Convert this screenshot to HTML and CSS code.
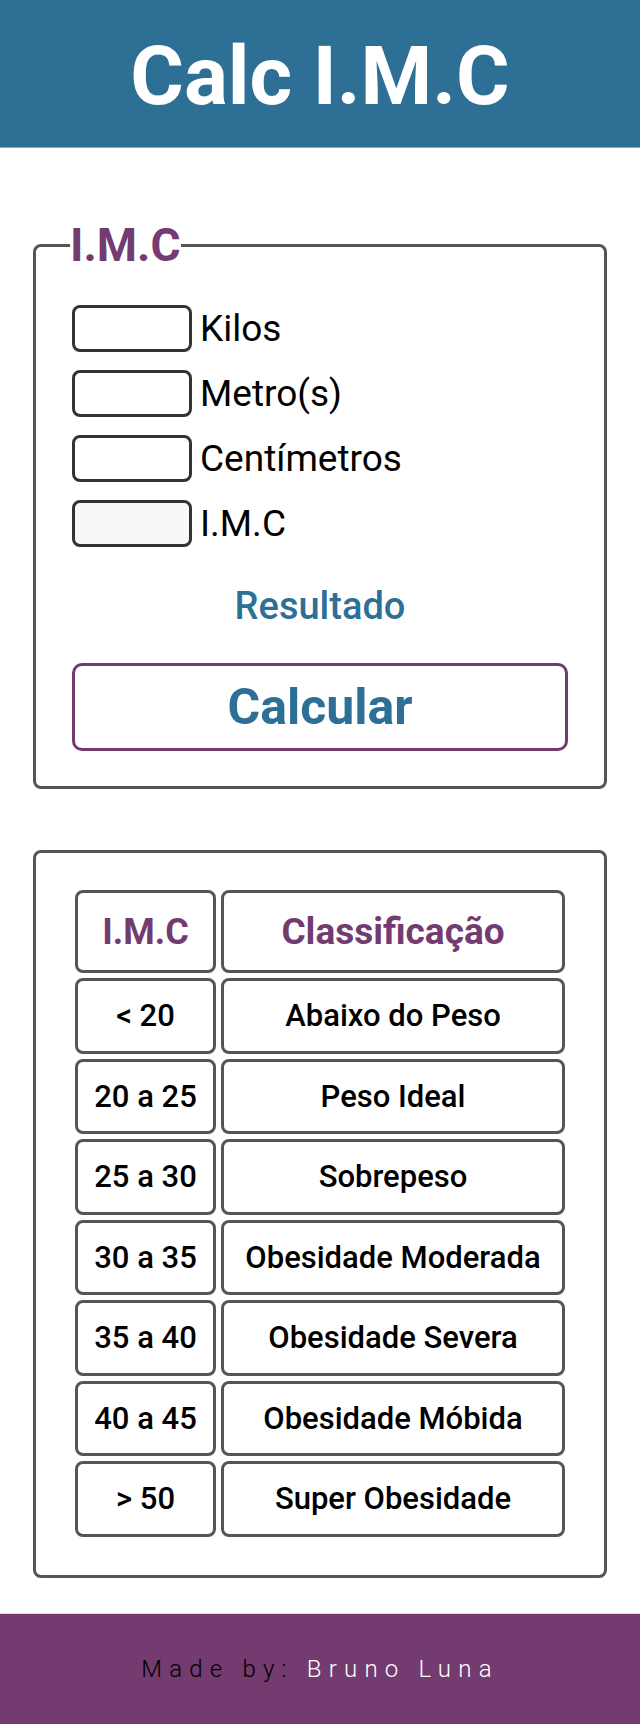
FILE: index.html
```html
<!DOCTYPE html>
<html lang="pt-BR">
<head>
<meta charset="utf-8">
<title>Calc I.M.C</title>
<link rel="stylesheet" href="styles.css">
</head>
<body>
<header class="topo">
  <h1 class="titulo">Calc I.M.C</h1>
</header>
<main class="conteudo">
  <fieldset class="calc">
    <legend class="calc-legenda">I.M.C</legend>
    <div class="campos">
      <div class="campo"><input class="entrada" type="text"><label class="rotulo">Kilos</label></div>
      <div class="campo"><input class="entrada" type="text"><label class="rotulo">Metro(s)</label></div>
      <div class="campo"><input class="entrada" type="text"><label class="rotulo">Centímetros</label></div>
      <div class="campo"><input class="entrada entrada-fixa" type="text" readonly><label class="rotulo">I.M.C</label></div>
    </div>
    <p class="resultado">Resultado</p>
    <button class="botao" type="button">Calcular</button>
  </fieldset>
  <section class="tabela-card">
    <table class="tabela">
      <thead>
        <tr><th class="col-imc">I.M.C</th><th>Classificação</th></tr>
      </thead>
      <tbody>
        <tr><td>&lt; 20</td><td>Abaixo do Peso</td></tr>
        <tr><td>20 a 25</td><td>Peso Ideal</td></tr>
        <tr><td>25 a 30</td><td>Sobrepeso</td></tr>
        <tr><td>30 a 35</td><td>Obesidade Moderada</td></tr>
        <tr><td>35 a 40</td><td>Obesidade Severa</td></tr>
        <tr><td>40 a 45</td><td>Obesidade Móbida</td></tr>
        <tr><td>&gt; 50</td><td>Super Obesidade</td></tr>
      </tbody>
    </table>
  </section>
</main>
<footer class="rodape">
  <p class="assinatura"><span class="feito">Made by:</span> <span class="autor">Bruno Luna</span></p>
</footer>
</body>
</html>
```

FILE: styles.css
```css
* { box-sizing: border-box; }

body {
  margin: 0;
  font-family: Roboto, "Liberation Sans", sans-serif;
  color: #000;
  background: #fff;
}

.topo {
  height: 148px;
  padding-top: 4px;
  background: #2e7095;
  border-bottom: 1px solid #7fa9c4;
  display: flex;
  align-items: center;
  justify-content: center;
}

.titulo {
  margin: 0;
  color: #fff;
  font-size: 82px;
  font-weight: 700;
  line-height: 1;
}

.conteudo {
  padding: 70px 33px 35px;
}

.calc {
  margin: 0;
  min-width: 0;
  border: 3px solid #555;
  border-radius: 8px;
  padding: 33px 36px 35px;
}

.calc-legenda {
  margin-left: -2px;
  padding: 0;
  font-size: 46px;
  font-weight: 700;
  color: #733b6f;
}

.campos {
  display: flex;
  flex-direction: column;
  gap: 18px;
}

.campo {
  display: flex;
  align-items: center;
}

.entrada {
  width: 120px;
  height: 47px;
  margin: 0;
  padding: 0 8px;
  border: 3px solid #333;
  border-radius: 8px;
  background: #fff;
  font: inherit;
}

.entrada-fixa {
  background: #f8f8f8;
}

.rotulo {
  margin-left: 8px;
  font-size: 37px;
  color: #000;
}

.resultado {
  margin: 37px 0 0;
  text-align: center;
  font-size: 38px;
  font-weight: 500;
  color: #2e7095;
}

.botao {
  display: block;
  width: 100%;
  height: 88px;
  margin-top: 35px;
  border: 3px solid #733b6f;
  border-radius: 10px;
  background: #fff;
  font-family: inherit;
  font-size: 50px;
  font-weight: 700;
  color: #2e7095;
}

.tabela-card {
  margin-top: 61px;
  border: 3px solid #555;
  border-radius: 8px;
  padding: 32px 34px 33px;
}

.tabela {
  width: 100%;
  table-layout: fixed;
  border-collapse: separate;
  border-spacing: 5px;
}

.tabela th,
.tabela td {
  border: 3px solid #555;
  border-radius: 8px;
  padding: 0;
  text-align: center;
  vertical-align: middle;
}

.tabela th {
  height: 83px;
  font-size: 37px;
  font-weight: 700;
  color: #733b6f;
}

.tabela .col-imc {
  width: 141px;
  font-size: 36px;
}

.tabela td {
  height: 75.5px;
  font-size: 31px;
  font-weight: 500;
  color: #000;
}

.rodape {
  height: 111px;
  background: #733b6f;
  border-top: 1px solid #ddd;
  display: flex;
  align-items: center;
  justify-content: center;
}

.assinatura {
  margin: 0;
  font-size: 24px;
  font-weight: 300;
  letter-spacing: 0.3em;
}

.feito { color: #000; }
.autor { color: #fff; }
```
